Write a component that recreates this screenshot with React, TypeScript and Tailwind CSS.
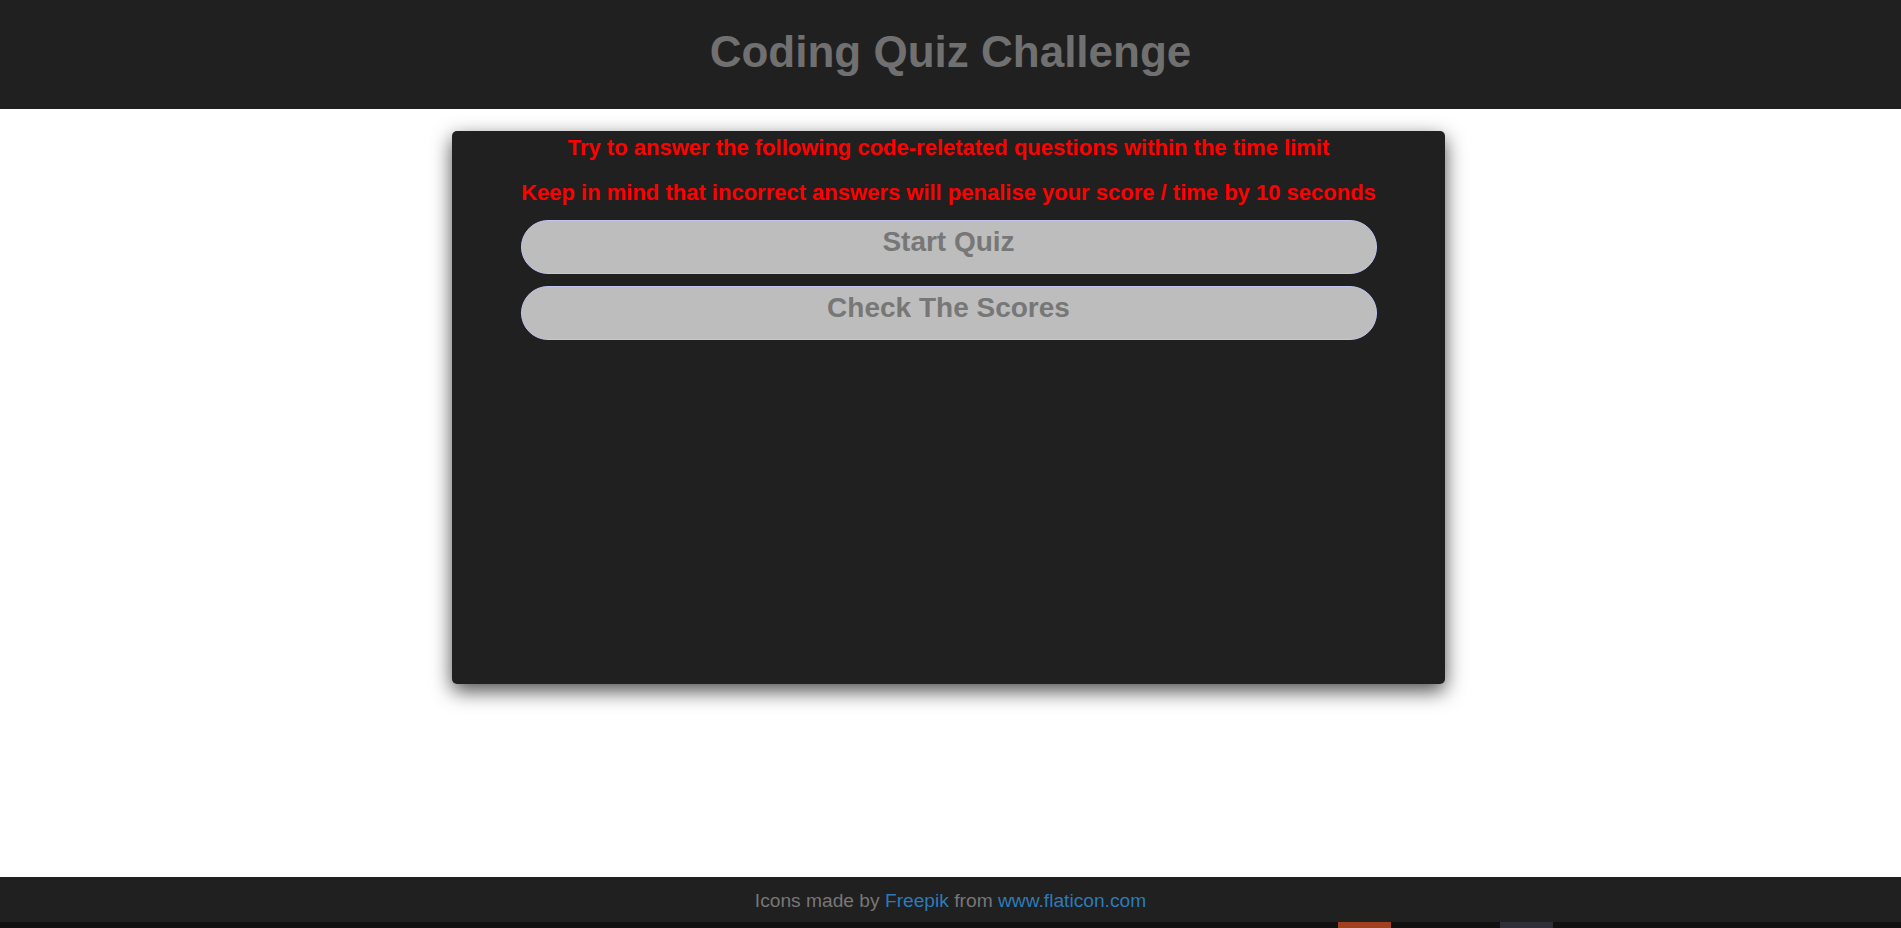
const App = () => {
  return (
    <div className="flex h-[928px] flex-col bg-white font-['Liberation_Sans',Arial,sans-serif]">
      <header className="flex h-[109px] shrink-0 items-center justify-center bg-[#202020] pb-[7px]">
        <h1 className="text-[44px] font-bold leading-[51px] text-[#707070]">Coding Quiz Challenge</h1>
      </header>

      <main className="flex-1 pt-[22px]">
        <div className="ml-[452px] h-[553px] w-[993px] rounded-[5px] bg-[#202020] pt-[4px] shadow-[0_7px_20px_rgba(0,0,0,0.7)]">
          <p className="text-center text-[22px] font-bold leading-[25px] text-[#ff0000]">
            Try to answer the following code-reletated questions within the time limit
          </p>
          <p className="mt-[20px] text-center text-[22px] font-bold leading-[25px] text-[#ff0000]">
            Keep in mind that incorrect answers will penalise your score / time by 10 seconds
          </p>
          <div className="mx-auto mt-[15px] flex w-[856px] flex-col gap-[12px]">
            <button className="flex h-[54px] items-start justify-center rounded-full border border-[#bfc5ee] bg-[#bdbdbd] pt-[5px] text-center text-[28px] font-bold leading-[32px] text-[#777777]">
              Start Quiz
            </button>
            <button className="flex h-[54px] items-start justify-center rounded-full border border-[#bfc5ee] bg-[#bdbdbd] pt-[5px] text-center text-[28px] font-bold leading-[32px] text-[#777777]">
              Check The Scores
            </button>
          </div>
        </div>
      </main>

      <footer className="flex h-[45px] shrink-0 items-center justify-center bg-[#202020] pt-[4px] text-[19.2px] text-[#777777]">
        <span>
          Icons made by <a className="text-[#2b7bb9]">Freepik</a> from{' '}
          <a className="text-[#2b7bb9]">www.flaticon.com</a>
        </span>
      </footer>
      <div className="flex h-[6px] shrink-0 bg-[#111111]">
        <div className="ml-[1338px] w-[53px] bg-[#a0401f]" />
        <div className="ml-[109px] w-[53px] bg-[#2e2f38]" />
      </div>
    </div>
  );
};

export default App;
